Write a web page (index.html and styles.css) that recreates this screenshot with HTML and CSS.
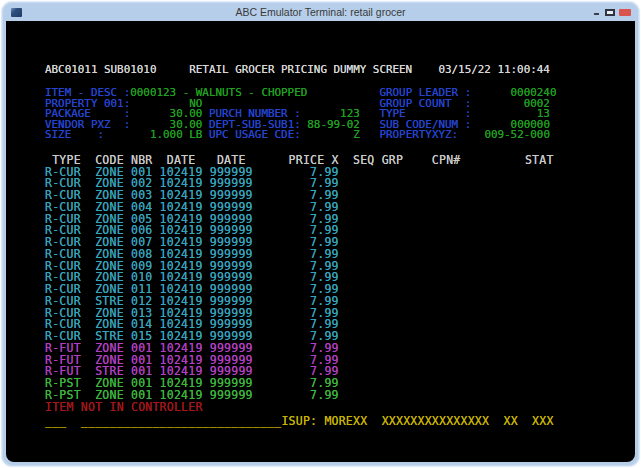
FILE: index.html
```html
<!DOCTYPE html>
<html>
<head>
<meta charset="utf-8">
<title>ABC Emulator Terminal: retail grocer</title>
<link rel="stylesheet" href="styles.css">
</head>
<body>
<div class="window">
  <div class="titlebar">
    <div class="appicon"></div>
    <div class="title">ABC Emulator Terminal: retail grocer</div>
    <div class="controls"><span class="ctl-min"></span><span class="ctl-max"></span><span class="ctl-close"></span></div>
  </div>
  <div class="terminal">
    <div class="hline heading">ABC01011 SUB01010     RETAIL GROCER PRICING DUMMY SCREEN    03/15/22 11:00:44</div>
    <div class="hblock">
      <div class="hline"><span class="lbl">ITEM - DESC :</span><span class="val">0000123 - WALNUTS - CHOPPED</span>           <span class="lbl">GROUP LEADER :</span>      <span class="val">0000240</span></div>
      <div class="hline"><span class="lbl">PROPERTY 001:</span>         <span class="val">NO</span>                           <span class="lbl">GROUP COUNT  :</span>        <span class="val">0002</span></div>
      <div class="hline"><span class="lbl">PACKAGE     :</span>      <span class="val">30.00</span> <span class="lbl">PURCH NUMBER :</span>      <span class="val">123</span>   <span class="lbl">TYPE         :</span>          <span class="val">13</span></div>
      <div class="hline"><span class="lbl">VENDOR PXZ  :</span>      <span class="val">30.00</span> <span class="lbl">DEPT-SUB-SUB1:</span> <span class="val">88-99-02</span>   <span class="lbl">SUB CODE/NUM :</span>      <span class="val">000000</span></div>
      <div class="hline"><span class="lbl">SIZE    :</span>       <span class="val">1.000 LB</span> <span class="lbl">UPC USAGE CDE:</span>        <span class="val">Z</span>   <span class="lbl">PROPERTYXYZ:</span>    <span class="val">009-52-000</span></div>
    </div>
    <div class="dblock">
      <div class="dline colhead"> TYPE  CODE NBR  DATE   DATE      PRICE X  SEQ GRP    CPN#         STAT</div>
      <div class="dline cur">R-CUR  ZONE 001 102419 999999        7.99</div>
      <div class="dline cur">R-CUR  ZONE 002 102419 999999        7.99</div>
      <div class="dline cur">R-CUR  ZONE 003 102419 999999        7.99</div>
      <div class="dline cur">R-CUR  ZONE 004 102419 999999        7.99</div>
      <div class="dline cur">R-CUR  ZONE 005 102419 999999        7.99</div>
      <div class="dline cur">R-CUR  ZONE 006 102419 999999        7.99</div>
      <div class="dline cur">R-CUR  ZONE 007 102419 999999        7.99</div>
      <div class="dline cur">R-CUR  ZONE 008 102419 999999        7.99</div>
      <div class="dline cur">R-CUR  ZONE 009 102419 999999        7.99</div>
      <div class="dline cur">R-CUR  ZONE 010 102419 999999        7.99</div>
      <div class="dline cur">R-CUR  ZONE 011 102419 999999        7.99</div>
      <div class="dline cur">R-CUR  STRE 012 102419 999999        7.99</div>
      <div class="dline cur">R-CUR  ZONE 013 102419 999999        7.99</div>
      <div class="dline cur">R-CUR  ZONE 014 102419 999999        7.99</div>
      <div class="dline cur">R-CUR  STRE 015 102419 999999        7.99</div>
      <div class="dline fut">R-FUT  ZONE 001 102419 999999        7.99</div>
      <div class="dline fut">R-FUT  ZONE 001 102419 999999        7.99</div>
      <div class="dline fut">R-FUT  STRE 001 102419 999999        7.99</div>
      <div class="dline pst">R-PST  ZONE 001 102419 999999        7.99</div>
      <div class="dline pst">R-PST  ZONE 001 102419 999999        7.99</div>
      <div class="dline err">ITEM NOT IN CONTROLLER</div>
      <div class="dline cmd">___  ____________________________ISUP: MOREXX  XXXXXXXXXXXXXXX  XX  XXX</div>
    </div>
  </div>
</div>
</body>
</html>
```

FILE: styles.css
```css
html, body {
  margin: 0;
  padding: 0;
  background: #ffffff;
}

.window {
  margin: 2px;
  width: 637px;
  height: 464px;
  box-sizing: border-box;
  padding: 0 4px 4px 4px;
  background: #b6cee9;
  border-radius: 10px;
  box-shadow: inset 0 0 0 1px #cadcf1, 0 0 1px 1px #dde8f5;
  display: flex;
  flex-direction: column;
}

.titlebar {
  height: 19px;
  flex: none;
  display: grid;
  grid-template-columns: 1fr auto 1fr;
  align-items: center;
}

.appicon {
  justify-self: start;
  margin-left: 5px;
  margin-top: 2px;
  width: 11px;
  height: 9px;
  border-radius: 1px;
  background: linear-gradient(135deg, #6f8fb8 0%, #2d4f7e 35%, #1e3a63 100%);
}

.title {
  font-family: "Liberation Sans", Arial, sans-serif;
  font-size: 10.5px;
  color: #3a3a3a;
  margin-top: 1px;
}

.controls {
  justify-self: end;
  margin-right: 4px;
  margin-top: 2px;
  display: flex;
  align-items: flex-end;
  gap: 4px;
}

.ctl-min {
  width: 5px;
  height: 2px;
  background: #3b3f46;
  margin-bottom: 1px;
  margin-right: 2px;
}

.ctl-max {
  width: 6px;
  height: 3px;
  border: 2px solid #2f3440;
  background: #e8eef6;
}

.ctl-close {
  width: 12px;
  height: 7px;
  background: #d9534f;
  border-radius: 1px;
}

.terminal {
  flex: 1;
  background: #000000;
  border-radius: 0 0 8px 8px;
  padding: 42.5px 0 0 39px;
  font-family: "DejaVu Sans Mono", monospace;
  overflow: hidden;
  text-shadow: 0 0 0.6px currentColor;
}

.hline {
  white-space: pre;
  font-size: 10.9px;
  line-height: 10.6px;
  height: 10.6px;
}

.heading {
  color: #d6d6d6;
  line-height: 11px;
  height: 11px;
}

.hblock {
  margin-top: 13.5px;
}

.lbl {
  color: #2443cf;
}

.val {
  color: #1f9f1f;
}

.dblock {
  margin-top: 13.8px;
}

.dline {
  white-space: pre;
  font-size: 11.5px;
  letter-spacing: 0.24px;
  line-height: 11.75px;
  height: 11.75px;
}

.colhead {
  color: #c9c9c9;
}

.cur {
  color: #36a3bd;
}

.fut {
  color: #b23fc2;
}

.pst {
  color: #3db53d;
}

.err {
  color: #a5161a;
}

.cmd {
  color: #c7b300;
  margin-top: 3.1px;
}
```
